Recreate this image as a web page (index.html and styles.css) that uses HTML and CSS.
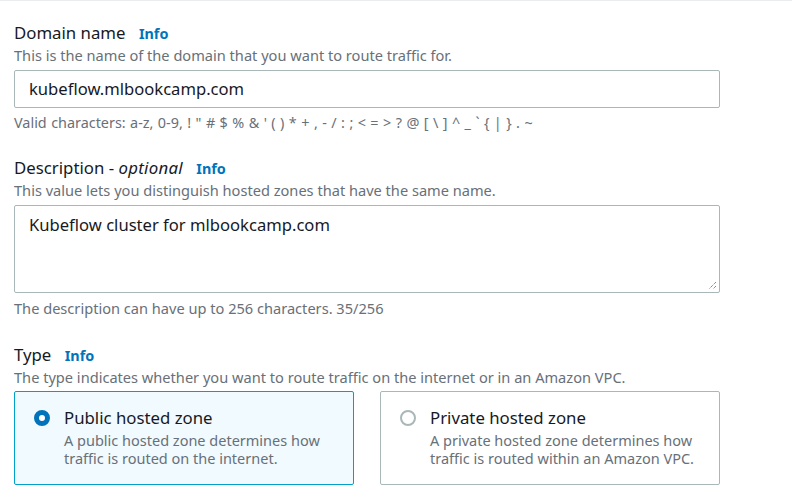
FILE: index.html
```html
<!DOCTYPE html>
<html>
<head>
<meta charset="utf-8">
<link rel="stylesheet" href="styles.css">
</head>
<body>
<div class="page">
  <div class="field">
    <div class="label">Domain name <a class="info">Info</a></div>
    <div class="desc">This is the name of the domain that you want to route traffic for.</div>
    <div class="input">kubeflow.mlbookcamp.com</div>
    <div class="hint">Valid characters: a-z, 0-9, ! " # $ % &amp; ' ( ) * + , - / : ; &lt; = &gt; ? @ [ \ ] ^ _ ` { | } . ~</div>
  </div>
  <div class="field field-desc">
    <div class="label">Description - <i>optional</i> <a class="info">Info</a></div>
    <div class="desc">This value lets you distinguish hosted zones that have the same name.</div>
    <div class="textarea">Kubeflow cluster for mlbookcamp.com
      <svg class="grip" width="9" height="9" viewBox="0 0 9 9"><path d="M8 1L1 8M8 5L5 8" stroke="#555" stroke-width="1" stroke-dasharray="1 1"/></svg>
    </div>
    <div class="hint2">The description can have up to 256 characters. 35/256</div>
  </div>
  <div class="field">
    <div class="label">Type <a class="info">Info</a></div>
    <div class="desc">The type indicates whether you want to route traffic on the internet or in an Amazon VPC.</div>
    <div class="cards">
      <div class="card selected">
        <span class="radio on"></span>
        <div class="ctext">
          <div class="ctitle">Public hosted zone</div>
          <div class="cdesc">A public hosted zone determines how traffic is routed on the internet.</div>
        </div>
      </div>
      <div class="card">
        <span class="radio"></span>
        <div class="ctext">
          <div class="ctitle">Private hosted zone</div>
          <div class="cdesc">A private hosted zone determines how traffic is routed within an Amazon VPC.</div>
        </div>
      </div>
    </div>
  </div>
</div>
</body>
</html>
```
FILE: styles.css
```css
html, body { margin: 0; padding: 0; background: #fff; }
body { font-family: "Noto Sans", "Open Sans", sans-serif; color: #16191f; border-top: 1px solid #eaeded; }
.page { padding: 21px 0 0 14px; width: 706px; }
.field { margin-bottom: 24px; }
.field-desc { margin-bottom: 26px; }
.label { font-size: 16.8px; line-height: 22px; }
.label i { font-style: italic; letter-spacing: 0.3px; }
.info { color: #0073bb; font-weight: bold; font-size: 14.4px; margin-left: 9px; }
.desc { font-size: 14.6px; line-height: 20px; color: #687078; }
.input { margin-top: 5px; height: 36px; border: 1px solid #aab7b8; border-radius: 2px; font-size: 16.6px; line-height: 36px; padding-left: 14px; }
.hint { margin-top: 5px; font-size: 14.4px; line-height: 20px; color: #687078; word-spacing: 0.7px; }
.textarea { position: relative; margin-top: 5px; border: 1px solid #aab7b8; border-radius: 2px; font-size: 16.6px; line-height: 22px; padding: 8px 14px 0; box-sizing: border-box; height: 88px; }
.grip { position: absolute; right: 2px; bottom: 2px; }
.hint2 { margin-top: 5px; font-size: 14.6px; line-height: 20px; color: #687078; }
.cards { margin-top: 4px; display: flex; gap: 26px; }
.card { flex: 1; display: flex; gap: 14px; border: 1px solid #aab7b8; border-radius: 2px; padding: 15px 19px 17px; }
.card.selected { background: #f1faff; border-color: #00a1c9; }
.radio { flex: none; width: 16px; height: 16px; box-sizing: border-box; border-radius: 50%; border: 2px solid #aab7b8; margin-top: 3px; background: #fff; }
.radio.on { border: 5px solid #0073bb; }
.ctitle { font-size: 16.8px; line-height: 22px; }
.cdesc { margin-top: 2px; font-size: 14.5px; line-height: 18px; color: #687078; }
```
